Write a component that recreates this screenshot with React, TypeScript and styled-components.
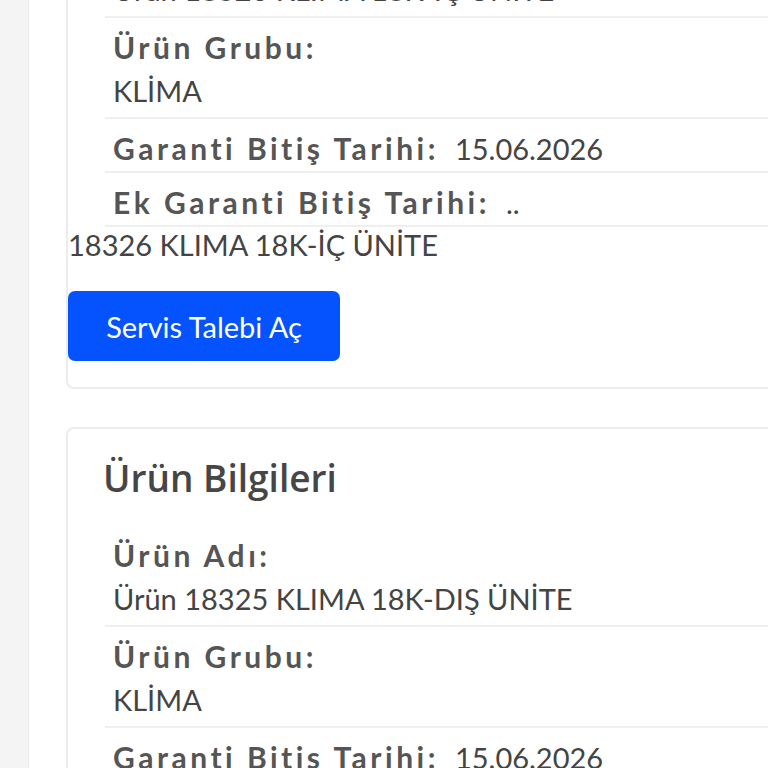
import React from 'react';
import styled, { createGlobalStyle } from 'styled-components';

const GlobalStyle = createGlobalStyle`
  html, body {
    margin: 0;
    padding: 0;
    background: #f4f4f4;
    overflow: hidden;
  }
  body {
    font-family: Lato, "Open Sans", "Liberation Sans", sans-serif;
    color: #444;
  }
`;

interface Row {
  label: string;
  value: string;
  inline?: boolean;
}

interface Product {
  note: string;
  rows: Row[];
}

const products: Product[] = [
  {
    note: '18326 KLIMA 18K-İÇ ÜNİTE',
    rows: [
      { label: 'Ürün Adı:', value: 'Ürün 18326 KLIMA 18K-İÇ ÜNİTE' },
      { label: 'Ürün Grubu:', value: 'KLİMA' },
      { label: 'Garanti Bitiş Tarihi:', value: '15.06.2026', inline: true },
      { label: 'Ek Garanti Bitiş Tarihi:', value: '..', inline: true },
    ],
  },
  {
    note: '18325 KLIMA 18K-DIŞ ÜNİTE',
    rows: [
      { label: 'Ürün Adı:', value: 'Ürün 18325 KLIMA 18K-DIŞ ÜNİTE' },
      { label: 'Ürün Grubu:', value: 'KLİMA' },
      { label: 'Garanti Bitiş Tarihi:', value: '15.06.2026', inline: true },
      { label: 'Ek Garanti Bitiş Tarihi:', value: '..', inline: true },
    ],
  },
];

export default function App() {
  return (
    <>
      <GlobalStyle />
      <Page>
        <Gutter />
        <Main>
          {products.map((p, i) => (
            <Card key={i}>
              <CardTitle>Ürün Bilgileri</CardTitle>
              <InfoList>
                {p.rows.map((r, k) => (
                  <InfoRow key={k} $inline={r.inline}>
                    <Label>{r.label}</Label>
                    <Value $inline={r.inline}>{r.value}</Value>
                  </InfoRow>
                ))}
              </InfoList>
              <Note>{p.note}</Note>
              <PrimaryButton type="button">Servis Talebi Aç</PrimaryButton>
            </Card>
          ))}
        </Main>
      </Page>
    </>
  );
}

const Page = styled.div`
  display: flex;
  min-height: 768px;
`;

const Gutter = styled.div`
  width: 28px;
  flex-shrink: 0;
  background: #f4f4f4;
  border-right: 1px solid #ebebeb;
`;

const Main = styled.main`
  flex: 1;
  background: #fff;
  padding-left: 37px;
  /* page is scrolled: first card starts above the viewport */
  margin-top: -182px;
  overflow: hidden;
`;

const Card = styled.section`
  border: 2px solid #ececec;
  border-right: none;
  border-radius: 8px 0 0 8px;
  padding: 27px 0 26px 0;
  margin-bottom: 38px;
`;

const CardTitle = styled.h2`
  margin: 0 0 26px 35px;
  font-family: "Open Sans", Lato, sans-serif;
  font-weight: 600;
  font-size: 37px;
  line-height: 44px;
  color: #464646;
`;

const InfoList = styled.div`
  margin-left: 37px;
`;

const InfoRow = styled.div<{ $inline?: boolean }>`
  display: flex;
  flex-direction: ${(p) => (p.$inline ? 'row' : 'column')};
  align-items: ${(p) => (p.$inline ? 'baseline' : 'flex-start')};
  padding: 7px 0 ${(p) => (p.$inline ? '0' : '4px')} 8px;
  border-bottom: 2px solid #efefef;
`;

const Label = styled.span`
  font-weight: 700;
  font-size: 30px;
  line-height: 44px;
  letter-spacing: 3.5px;
  color: #555;
`;

const Value = styled.span<{ $inline?: boolean }>`
  font-size: 29px;
  line-height: 44px;
  color: #444;
  margin-left: ${(p) => (p.$inline ? '16px' : '0')};
`;

const Note = styled.div`
  font-size: 29px;
  line-height: 36px;
  color: #444;
`;

const PrimaryButton = styled.button`
  display: block;
  margin-top: 28px;
  width: 272px;
  height: 70px;
  border: none;
  border-radius: 7px;
  background: #0553ff;
  color: #fff;
  font-family: Lato, sans-serif;
  font-size: 29px;
  padding: 0;
`;
